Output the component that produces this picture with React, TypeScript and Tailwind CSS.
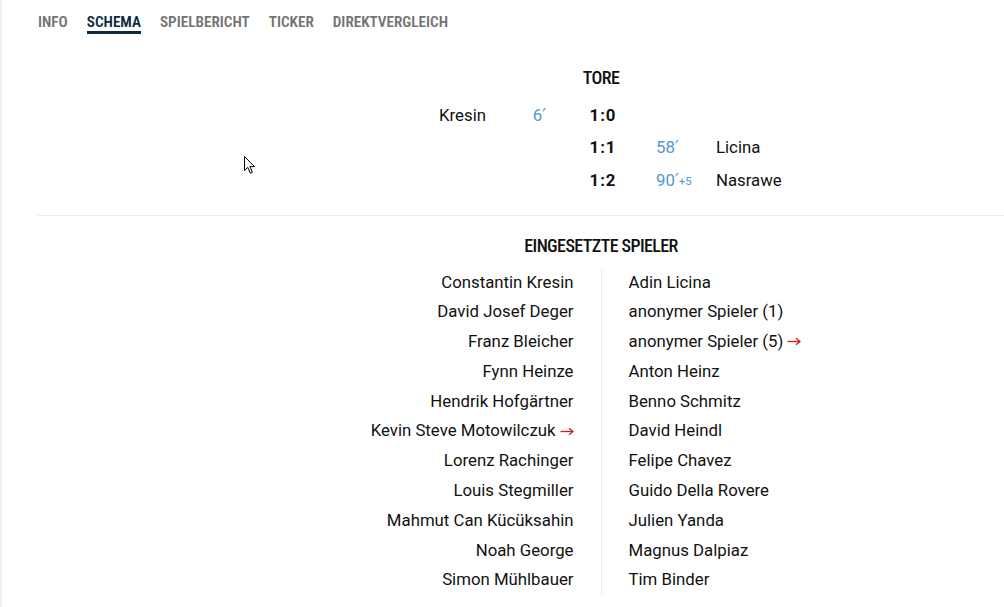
import React from "react";

const cond = { fontFamily: '"Roboto Condensed", "Liberation Sans Narrow", sans-serif' };

const home = [
  { n: "Constantin Kresin" },
  { n: "David Josef Deger" },
  { n: "Franz Bleicher" },
  { n: "Fynn Heinze" },
  { n: "Hendrik Hofgärtner" },
  { n: "Kevin Steve Motowilczuk", out: true },
  { n: "Lorenz Rachinger" },
  { n: "Louis Stegmiller" },
  { n: "Mahmut Can Kücüksahin" },
  { n: "Noah George" },
  { n: "Simon Mühlbauer" },
];

const away = [
  { n: "Adin Licina" },
  { n: "anonymer Spieler (1)" },
  { n: "anonymer Spieler (5)", out: true },
  { n: "Anton Heinz" },
  { n: "Benno Schmitz" },
  { n: "David Heindl" },
  { n: "Felipe Chavez" },
  { n: "Guido Della Rovere" },
  { n: "Julien Yanda" },
  { n: "Magnus Dalpiaz" },
  { n: "Tim Binder" },
];

const goals = [
  { side: "home", name: "Kresin", min: "6", extra: "", score: "1:0" },
  { side: "away", name: "Licina", min: "58", extra: "", score: "1:1" },
  { side: "away", name: "Nasrawe", min: "90", extra: "+5", score: "1:2" },
];

const tabs = ["INFO", "SCHEMA", "SPIELBERICHT", "TICKER", "DIREKTVERGLEICH"];

function Minute({ min, extra }: { min: string; extra: string }) {
  return (
    <span className="text-[#4f97d1]">
      {min}
      <span style={{ fontFamily: '"DejaVu Sans", sans-serif' }} className="text-[17px]">′</span>
      {extra && <sup className="text-[11.5px] relative -top-[1px]">{extra}</sup>}
    </span>
  );
}

function Arrow() {
  return (
    <svg className="inline-block ml-[4px] align-middle -mt-[2px]" width="14" height="9" viewBox="0 0 14 9">
      <path d="M0.5 4.5 H12.5" stroke="#d41c1c" strokeWidth="1.3" />
      <path d="M9 1.2 L13 4.5 L9 7.8" fill="none" stroke="#d41c1c" strokeWidth="1.3" />
    </svg>
  );
}

export default function App() {
  return (
    <div
      className="relative w-[1004px] h-[607px] overflow-hidden bg-white border-l-2 border-[#f3f3f3] text-[#111]"
      style={{ fontFamily: 'Roboto, "Liberation Sans", sans-serif' }}
    >
      <div className="w-[1126px] ml-[36px]">
        {/* tabs */}
        <nav className="flex gap-[19px] pt-[13px]" style={cond}>
          {tabs.map((t) => (
            <div
              key={t}
              className={
                t === "SCHEMA"
                  ? "text-[15.2px] font-semibold leading-[18px] text-[#0b2a40] border-b-[3px] border-[#0b2a40]"
                  : "text-[15.2px] font-semibold leading-[18px] text-[#737373] border-b-[3px] border-transparent"
              }
            >
              {t}
            </div>
          ))}
        </nav>

        {/* Tore */}
        <h2
          className="mt-[32px] text-center text-[18px] leading-[24px] font-medium tracking-[-0.6px] text-[#111]"
          style={cond}
        >
          TORE
        </h2>
        <div className="mt-[9px] flex flex-col items-center">
          {goals.map((g, i) => (
            <div key={i} className="flex items-center h-[32.5px] text-[16.8px]">
              <div className="w-[100px] text-right">{g.side === "home" ? g.name : ""}</div>
              <div className="w-[60px] text-right">
                {g.side === "home" ? <Minute min={g.min} extra={g.extra} /> : ""}
              </div>
              <div className="w-[110px] flex justify-center pl-[4px] font-bold tracking-[1px]">{g.score}</div>
              <div className="w-[60px]">
                {g.side === "away" ? <Minute min={g.min} extra={g.extra} /> : ""}
              </div>
              <div className="w-[100px]">{g.side === "away" ? g.name : ""}</div>
            </div>
          ))}
        </div>

        <div className="mt-[18px] h-px bg-[#ececec]" />

        {/* Eingesetzte Spieler */}
        <h2
          className="mt-[18px] text-center text-[18px] leading-[24px] font-medium tracking-[-0.6px] text-[#111]"
          style={cond}
        >
          EINGESETZTE SPIELER
        </h2>
        <div className="mt-[10px] flex justify-center text-[16.8px]">
          <div className="w-[300px] pr-[27px] text-right">
            {home.map((p) => (
              <div key={p.n} className="leading-[29.8px] whitespace-nowrap">
                {p.n}
                {p.out && <Arrow />}
              </div>
            ))}
          </div>
          <div className="w-px bg-[#ececec]" />
          <div className="w-[300px] pl-[27px]">
            {away.map((p) => (
              <div key={p.n} className="leading-[29.8px] whitespace-nowrap">
                {p.n}
                {p.out && <Arrow />}
              </div>
            ))}
          </div>
        </div>
      </div>

      {/* mouse cursor overlay */}
      <svg className="absolute left-[241px] top-[155px]" width="14" height="20" viewBox="0 0 14 20">
        <path
          d="M1.5 1.5 L1.5 15.5 L4.8 12.4 L7.3 18.2 L9.4 17.3 L6.9 11.6 L11.5 11.6 Z"
          fill="#fff"
          stroke="#000"
          strokeWidth="1"
        />
      </svg>
    </div>
  );
}
